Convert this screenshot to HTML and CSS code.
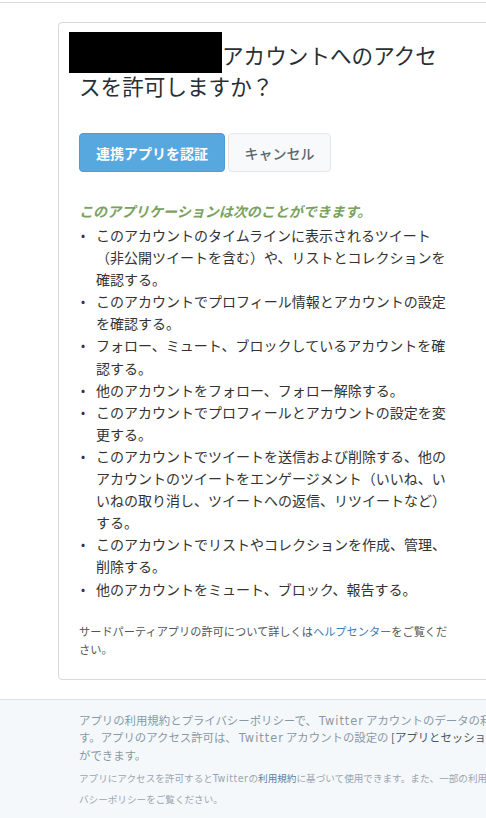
FILE: index.html
```html
<!DOCTYPE html>
<html lang="ja">
<head>
<meta charset="utf-8">
<title>アカウントへのアクセスを許可しますか？</title>
<link rel="stylesheet" href="styles.css">
</head>
<body>
<div class="topbar"></div>
<div class="card">
  <div class="main">
    <h2 class="title"><span class="redact"></span>アカウントへのアクセスを許可しますか？</h2>
    <div class="actions">
      <button class="btn btn-primary">連携アプリを認証</button>
      <button class="btn btn-cancel">キャンセル</button>
    </div>
    <p class="allowed">このアプリケーションは次のことができます。</p>
    <ul class="perms">
      <li>このアカウントのタイムラインに表示されるツイート（非公開ツイートを含む）や、リストとコレクションを確認する。</li>
      <li>このアカウントでプロフィール情報とアカウントの設定<br>を確認する。</li>
      <li>フォロー、ミュート、ブロックしているアカウントを確認する。</li>
      <li>他のアカウントをフォロー、フォロー解除する。</li>
      <li>このアカウントでプロフィールとアカウントの設定を変更する。</li>
      <li>このアカウントでツイートを送信および削除する、他のアカウントのツイートをエンゲージメント（いいね、いいねの取り消し、ツイートへの返信、リツイートなど）する。</li>
      <li>このアカウントでリストやコレクションを作成、管理、削除する。</li>
      <li>他のアカウントをミュート、ブロック、報告する。</li>
    </ul>
    <p class="note">サードパーティアプリの許可について詳しくは<a href="#">ヘルプセンター</a>をご覧ください。</p>
  </div>
</div>
<footer class="footer">
  <p class="footer-main">アプリの利用規約とプライバシーポリシーで、<span class="latin">Twitter</span>アカウントのデータの利用方法を確認できま<br>す。アプリのアクセス許可は、<span class="latin">Twitter</span>アカウントの設定の <a href="#">[アプリとセッション]</a> からいつでも取り消すこと<br>ができます。</p>
  <p class="footer-small">アプリにアクセスを許可すると<span class="latin">Twitter</span>の<a href="#">利用規約</a>に基づいて使用できます。また、一部の利用規約やプライ<br>バシーポリシーをご覧ください。</p>
</footer>
</body>
</html>
```
FILE: styles.css
```css
html, body {
  margin: 0;
  padding: 0;
  overflow: hidden;
  background: #ffffff;
}
body {
  font-family: "Noto Sans CJK JP", "Noto Sans", sans-serif;
  color: #333333;
  text-spacing-trim: space-all;
  width: 560px;
}
.topbar {
  height: 2px;
  border-bottom: 1px solid #dcdcdc;
}
.card {
  margin: 19px 0 0 58px;
  width: 470px;
  border: 1px solid #d9d9d9;
  border-radius: 4px;
  padding: 16px 20px 21px 20px;
  box-sizing: border-box;
}
.main {
  width: 372px;
}
.title {
  margin: 0;
  font-size: 21.6px;
  line-height: 31px;
  font-weight: 400;
  color: #292f33;
}
.redact {
  display: inline-block;
  width: 153px;
  height: 41px;
  background: #000000;
  margin: -7px 0 -3px -10px;
  vertical-align: top;
}
.actions {
  display: flex;
  gap: 3px;
  margin-top: 32px;
}
.btn {
  height: 39px;
  border-radius: 4px;
  font-family: inherit;
  font-size: 14px;
  padding: 0;
  white-space: nowrap;
  box-sizing: border-box;
}
.btn-primary {
  width: 146px;
  background: #58a8e0;
  border: 1px solid #4f9bd2;
  color: #ffffff;
  font-weight: 700;
}
.btn-cancel {
  width: 103px;
  background: #f7f9fa;
  border: 1px solid #e3e8ec;
  color: #5b6770;
  font-weight: 500;
}
.allowed {
  margin: 29px 0 0 0;
  font-size: 14px;
  line-height: 20px;
  font-weight: 700;
  font-style: italic;
  color: #7aa25e;
}
.perms {
  list-style: none;
  margin: 3px 0 0 0;
  padding: 0;
  font-size: 14px;
  line-height: 22.1px;
  color: #333333;
}
.perms li {
  display: flex;
}
.perms li::before {
  content: "•";
  flex: 0 0 15px;
  padding-left: 2px;
  font-size: 12px;
}
.note {
  margin: 22px 0 0 0;
  font-size: 11.2px;
  line-height: 18px;
  color: #555555;
}
.note a {
  color: #3d7ab8;
  text-decoration: none;
}
.footer {
  margin-top: 19px;
  border-top: 1px solid #dde2e6;
  background: #f5f8fa;
  padding: 12px 0 20px 79px;
  white-space: nowrap;
}
.footer-main {
  margin: 0;
  font-size: 11.4px;
  line-height: 16.5px;
  color: #8899a6;
}
.footer-main a {
  color: #4a5660;
  text-decoration: none;
}
.latin {
  font-family: "DejaVu Sans", sans-serif;
  letter-spacing: 1px;
  margin: 0 2px;
}
.footer-small {
  margin: 5px 0 0 0;
  font-size: 9.6px;
  line-height: 21px;
  color: #99a6b0;
}
.footer-small .latin {
  letter-spacing: 0.5px;
  margin: 0;
}
.footer-small a {
  color: #5a7ea0;
  text-decoration: none;
}
```
